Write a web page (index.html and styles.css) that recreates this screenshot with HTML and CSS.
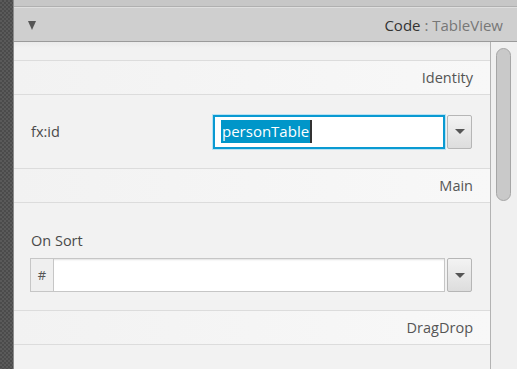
FILE: index.html
```html
<!DOCTYPE html>
<html lang="en">
<head>
  <meta charset="UTF-8" />
  <title>Inspector - Code</title>
  <link rel="stylesheet" href="styles.css">
</head>
<body>

<div class="rail"></div>

<div class="inspector">
  <div class="top-strip"></div>

  <div class="title-bar">
    <span class="toggle"></span>
    <span class="title"><b>Code</b> : TableView</span>
  </div>

  <div class="content">
    <div class="panel">
      <div class="spacer"></div>

      <div class="section">Identity</div>
      <div class="prop">
        <label class="prop-label">fx:id</label>
        <div class="field focused">
          <span class="selected">personTable</span><span class="caret"></span>
        </div>
        <button class="drop"><span class="arrow"></span></button>
      </div>

      <div class="section">Main</div>
      <div class="prop stacked">
        <label class="prop-label">On Sort</label>
        <div class="line">
          <div class="field">
            <span class="hash">#</span>
            <span class="input"></span>
          </div>
          <button class="drop"><span class="arrow"></span></button>
        </div>
      </div>

      <div class="section">DragDrop</div>
    </div>

    <!-- scrollbar -->
    <div class="scroll">
      <div class="thumb"></div>
    </div>
  </div>
</div>

</body>
</html>
```

FILE: styles.css
```css
html, body {
  margin: 0;
  padding: 0;
}

body {
  width: 517px;
  height: 369px;
  overflow: hidden;
  display: flex;
  font-family: 'Open Sans', 'Noto Sans', sans-serif;
  font-size: 14.5px;
  color: #4a4a4a;
  background: #f2f2f2;
}

.rail {
  width: 13px;
  flex: none;
  border-right: 1px solid #8c8c8c;
  background: repeating-conic-gradient(#4b4b4b 0 25%, #5a5a5a 0 50%) 0 0 / 4px 4px;
}

.inspector {
  flex: 1;
  display: flex;
  flex-direction: column;
  min-width: 0;
}

.top-strip {
  height: 6px;
  background: #c7c7c7;
  border-bottom: 1px solid #b0b0b0;
}

.title-bar {
  height: 33px;
  display: flex;
  align-items: center;
  justify-content: space-between;
  padding: 0 14px 0 14px;
  background: #cfcfcf;
  border-top: 1px solid #dfdfdf;
  border-bottom: 1px solid #9b9b9b;
}

.toggle {
  width: 0;
  height: 0;
  border-left: 4.5px solid transparent;
  border-right: 4.5px solid transparent;
  border-top: 9px solid #555;
  margin-top: 1px;
}

.title {
  font-size: 15px;
  color: #777;
}

.title b {
  font-weight: normal;
  color: #333;
}

.content {
  flex: 1;
  display: flex;
  min-height: 0;
}

.panel {
  flex: 1;
  border-right: 1px solid #b3b3b3;
  background: #f2f2f2;
}

.spacer {
  height: 18px;
  background: linear-gradient(#ebebeb, #f2f2f2 6px);
}

.section {
  height: 33px;
  line-height: 33px;
  text-align: right;
  padding-right: 17px;
  color: #555;
  border-top: 1px solid #dcdcdc;
  border-bottom: 1px solid #dcdcdc;
  background: linear-gradient(to right, #f2f2f2, #f8f8f8);
}

.prop {
  height: 73px;
  display: flex;
  align-items: center;
  padding: 0 18px 0 17px;
}

.prop-label {
  width: 182px;
  flex: none;
  color: #4a4a4a;
}

.field {
  flex: 1;
  height: 32px;
  display: flex;
  align-items: center;
  background: #fff;
  border: 1px solid #c6c6c6;
  box-shadow: inset 0 2px 2px -1px #e2e2e2;
}

.field.focused {
  height: 30px;
  border: 2px solid #0a9ad2;
  box-shadow: 0 0 0 1px #b8e2f3;
  padding-left: 6px;
  font-size: 15px;
}

.selected {
  background: #0096c9;
  color: #fff;
  line-height: 23px;
  padding: 0 1px;
}

.caret {
  width: 2px;
  height: 23px;
  background: #333;
}

.drop {
  width: 25px;
  height: 34px;
  flex: none;
  margin-left: 2px;
  padding: 0;
  border: 1px solid #b6b6b6;
  border-radius: 2px;
  background: linear-gradient(#f3f3f3, #dddddd);
  display: flex;
  align-items: center;
  justify-content: center;
}

.arrow {
  width: 0;
  height: 0;
  border-left: 5px solid transparent;
  border-right: 5px solid transparent;
  border-top: 5px solid #555;
}

.prop.stacked {
  height: auto;
  display: block;
  padding: 29px 18px 18px 16px;
}

.stacked .prop-label {
  display: block;
  line-height: 18px;
  margin: 0 0 8px 1px;
}

.line {
  display: flex;
}

.hash {
  width: 22px;
  height: 32px;
  line-height: 32px;
  text-align: center;
  font-size: 13px;
  color: #555;
  background: #efefef;
  border-right: 1px solid #c6c6c6;
}

.input {
  flex: 1;
}

.scroll {
  width: 26px;
  flex: none;
  background: #f0f0f0;
  padding: 6px 0 0 5px;
  box-sizing: border-box;
}

.thumb {
  width: 13px;
  height: 151px;
  background: #c9c9c9;
  border: 1px solid #a6a6a6;
  border-radius: 8px;
}
```
